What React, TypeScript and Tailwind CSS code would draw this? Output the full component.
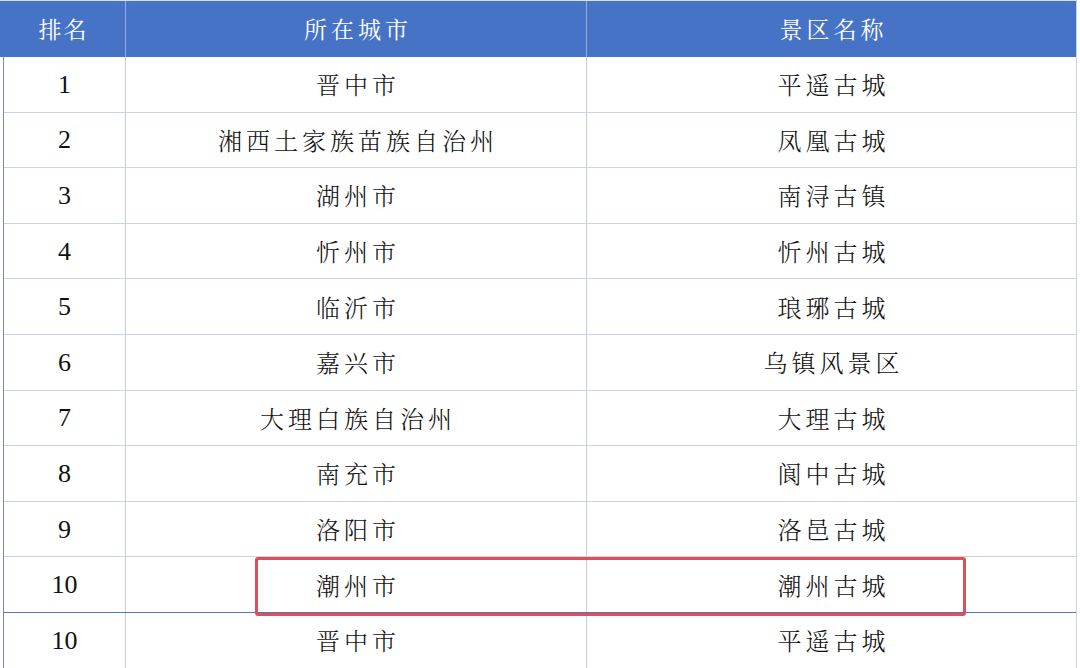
import React from "react";

const rows: [string, string, string][] = [
  ["1", "晋中市", "平遥古城"],
  ["2", "湘西土家族苗族自治州", "凤凰古城"],
  ["3", "湖州市", "南浔古镇"],
  ["4", "忻州市", "忻州古城"],
  ["5", "临沂市", "琅琊古城"],
  ["6", "嘉兴市", "乌镇风景区"],
  ["7", "大理白族自治州", "大理古城"],
  ["8", "南充市", "阆中古城"],
  ["9", "洛阳市", "洛邑古城"],
  ["10", "潮州市", "潮州古城"],
  ["10", "晋中市", "平遥古城"],
];

const cjk = "font-['Noto_Serif_CJK_SC','Noto_Sans_CJK_SC',serif]";

export default function App() {
  return (
    <div className="relative w-[1080px] h-[668px] overflow-hidden bg-white">
      <div className="w-[1077px] border-r border-[#c9d2e6]">
        {/* header */}
        <div className="grid grid-cols-[126px_461px_489px] h-[57px] bg-[#4673c6] border-t border-[#d7e0f2] text-white">
          <div className={`flex items-center justify-center border-r border-[#8eaae0] text-[23px] tracking-[2px] pl-[2px] ${cjk}`}>
            排名
          </div>
          <div className={`flex items-center justify-center border-r border-[#8eaae0] text-[23px] tracking-[4px] pl-[4px] ${cjk}`}>
            所在城市
          </div>
          <div className={`flex items-center justify-center text-[23px] tracking-[4px] pl-[4px] ${cjk}`}>
            景区名称
          </div>
        </div>
        {/* body */}
        <div className="ml-[3px] border-l border-[#6f8cc9]">
          {rows.map((r, i) => (
            <div
              key={i}
              className={`grid grid-cols-[122px_461px_489px] h-[55.6px] border-b ${
                i === 9 ? "border-[#5675b6]" : "border-[#cbd3e6]"
              }`}
            >
              <div className="flex items-center justify-center border-r border-[#c5cee4] font-['Liberation_Serif',serif] text-[26px] text-[#111]">
                {r[0]}
              </div>
              <div
                className={`flex items-center justify-center border-r border-[#c5cee4] text-[24px] tracking-[4px] pl-[4px] text-[#111] font-light ${cjk}`}
              >
                {r[1]}
              </div>
              <div
                className={`flex items-center justify-center text-[24px] tracking-[4px] pl-[4px] text-[#111] font-light ${cjk}`}
              >
                {r[2]}
              </div>
            </div>
          ))}
        </div>
      </div>
      {/* red highlight box */}
      <div className="absolute left-[255px] top-[557px] w-[711px] h-[59px] border-[3px] border-[#dd5059] rounded-[3px]" />
    </div>
  );
}
